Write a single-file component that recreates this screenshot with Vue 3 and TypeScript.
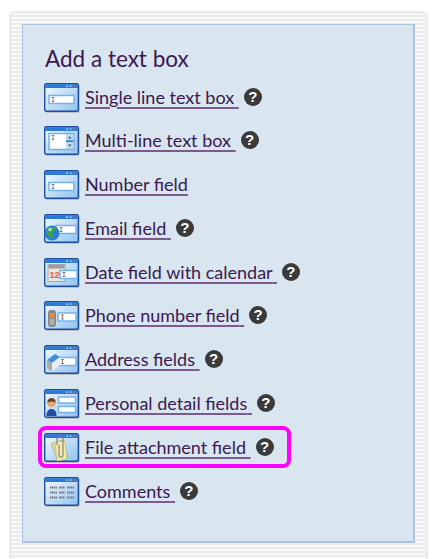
<script setup lang="ts">
interface Field {
	label: string;
	icon: string;
	trail?: boolean;
	help?: boolean;
	active?: boolean;
}

const fields: Field[] = [
	{ label: "Single line text box", icon: "single", trail: true, help: true },
	{ label: "Multi-line text box", icon: "multi", trail: true, help: true },
	{ label: "Number field", icon: "number" },
	{ label: "Email field", icon: "email", trail: true, help: true },
	{ label: "Date field with calendar", icon: "date", trail: true, help: true },
	{ label: "Phone number field", icon: "phone", trail: true, help: true },
	{ label: "Address fields", icon: "address", trail: true, help: true },
	{ label: "Personal detail fields", icon: "personal", trail: true, help: true },
	{ label: "File attachment field", icon: "file", trail: true, help: true, active: true },
	{ label: "Comments", icon: "comments", trail: true, help: true },
];
</script>

<template>
	<div class="page">
		<div class="card">
			<div class="panel">
				<h2>Add a text box</h2>
				<ul class="field-list">
					<li v-for="field in fields" :key="field.icon" class="field-row">
						<div class="field-item" :class="{ active: field.active }">
							<svg class="field-icon" width="36" height="30" viewBox="0 0 36 30">
								<defs>
									<linearGradient :id="'bg-' + field.icon" x1="0" y1="0" x2="1" y2="1">
										<stop offset="0" stop-color="#f4faff" />
										<stop offset="1" stop-color="#8fc2ef" />
									</linearGradient>
								</defs>
								<rect x="1.5" y="1.5" width="34" height="28" rx="1.5" fill="#888" opacity="0.7" />
								<rect x="0.7" y="0.7" width="33.6" height="27.6" rx="1.5" :fill="'url(#bg-' + field.icon + ')'" stroke="#1f4f9c" stroke-width="1.4" />
								<rect x="1.2" y="1.2" width="32.6" height="3.8" fill="#2a7ad6" />
								<rect x="22" y="2.4" width="2" height="1.4" fill="#a9cdf0" />
								<rect x="25.5" y="2.4" width="2" height="1.4" fill="#a9cdf0" />
								<rect x="29" y="2.4" width="2.4" height="1.4" fill="#e2603a" />

								<g v-if="field.icon === 'single' || field.icon === 'number'">
									<rect x="5" y="12.5" width="25" height="8" fill="#fff" stroke="#6fb0e6" stroke-width="1.4" />
									<path d="M7.5 14.5h3M9 14.5v4M7.5 18.5h3" stroke="#777" stroke-width="0.9" fill="none" />
								</g>

								<g v-else-if="field.icon === 'multi'">
									<rect x="5" y="7.5" width="25" height="16" fill="#fff" stroke="#6fb0e6" stroke-width="1.4" />
									<rect x="22" y="8" width="7.5" height="15" fill="#bcd9f2" />
									<path d="M24 12.5l1.8-2.2 1.8 2.2zM24 18.500l1.8 2.2 1.8-2.2z" fill="#555" />
									<rect x="22" y="14.4" width="7.5" height="1.6" fill="#2f7fd8" />
									<path d="M7.5 9.5h3M9 9.5v4M7.5 13.5h3" stroke="#777" stroke-width="0.9" fill="none" />
								</g>

								<g v-else-if="field.icon === 'email'">
									<rect x="12" y="11.5" width="20" height="8" fill="#fff" stroke="#6fb0e6" stroke-width="1.4" />
									<path d="M15.5 13.5h3M17 13.5v4M15.5 17.5h3" stroke="#777" stroke-width="0.9" fill="none" />
									<circle cx="8" cy="19" r="7.5" fill="#2a7fd0" />
									<path d="M2.500 16c3-4 7-4 10-2-1 3-3 2-4 4s1 3 0 6c-3 0-6-4-6-8z" fill="#3fa53a" />
									<circle cx="6" cy="15.500" r="1.800" fill="#cfe8fb" opacity="0.8" />
								</g>

								<g v-else-if="field.icon === 'date'">
									<rect x="4" y="6.500" width="17" height="17" fill="#e8e6e0" stroke="#9a9a9a" stroke-width="0.8" />
									<rect x="4.500" y="7" width="16" height="3.500" fill="#9c9c9c" />
									<text x="5.500" y="20" class="date-num">12</text>
									<rect x="16" y="12.500" width="17" height="8" fill="#fff" stroke="#6fb0e6" stroke-width="1.4" />
									<path d="M18.500 14.500h3M20 14.500v4M18.500 18.500h3" stroke="#777" stroke-width="0.9" fill="none" />
								</g>

								<g v-else-if="field.icon === 'phone'">
									<rect x="14" y="12" width="18" height="8" fill="#fff" stroke="#6fb0e6" stroke-width="1.4" />
									<path d="M17 14h3M18.500 14v4M17 18h3" stroke="#777" stroke-width="0.9" fill="none" />
									<rect x="4" y="9" width="8" height="17" rx="3" fill="#858585" />
									<rect x="5.500" y="12" width="5" height="5" fill="#e88a3a" />
									<rect x="5.500" y="18" width="5" height="6" fill="#b0b0b0" />
								</g>

								<g v-else-if="field.icon === 'address'">
									<rect x="14" y="12.500" width="18" height="8" fill="#fff" stroke="#6fb0e6" stroke-width="1.4" />
									<path d="M17 14.500h3M18.500 14.500v4M17 18.500h3" stroke="#777" stroke-width="0.9" fill="none" />
									<path d="M3 15l8-6 5 3-8 6z" fill="#3f8fdc" />
									<path d="M3 15l5 3v8l-5-3z" fill="#a9a9a9" />
									<path d="M8 18l8-6v8l-8 6z" fill="#ececec" />
								</g>

								<g v-else-if="field.icon === 'personal'">
									<rect x="14.500" y="8" width="17" height="6" fill="#fff" stroke="#6fb0e6" stroke-width="1.4" />
									<rect x="14.500" y="17.500" width="17" height="6" fill="#fff" stroke="#6fb0e6" stroke-width="1.4" />
									<path d="M2.500 27c0-5 2-7 5-7s5 2 5 7z" fill="#1f4fa0" />
									<circle cx="7.500" cy="14" r="4.200" fill="#e4a878" />
									<path d="M3.500 14c-1-6 9-7 8 0-2-2-6-2-8 0z" fill="#6b4423" />
								</g>

								<g v-else-if="field.icon === 'file'">
									<path d="M7 11l11-4 6 17-10 4z" fill="#dcd99e" stroke="#a8a468" stroke-width="0.6" />
									<path d="M11 9l10-1 2 18-10 2z" fill="#f0ebac" stroke="#b8b478" stroke-width="0.6" />
									<path d="M15 12v10c0 3 4 3 4 0V6c0-3-6-3-6 0v6" fill="none" stroke="#7e7e78" stroke-width="1.100" />
								</g>

								<g v-else>
									<path v-for="y in [10.5, 15.5, 20.5]" :key="y" :d="'M6 ' + y + 'h7M15 ' + y + 'h6M23 ' + y + 'h7'" stroke="#777" stroke-width="1.800" stroke-dasharray="1.400 0.500" fill="none" />
								</g>
							</svg>
							<a class="field-link" href="#">{{ field.label }}<span v-if="field.trail">&nbsp;</span></a>
							<span v-if="field.help" class="help-badge">?</span>
						</div>
					</li>
				</ul>
			</div>
		</div>
	</div>
</template>

<style scoped>
.page {
	width: 437px;
	height: 559px;
	overflow: hidden;
	padding: 12px 10px 0;
	box-sizing: border-box;
	background: #fff;
}

.card {
	height: 560px;
	box-sizing: border-box;
	padding: 11px 11px 0;
	border: 1px solid #e6e6e6;
	border-radius: 4px 4px 0 0;
	box-shadow: 0 0 3px rgba(0, 0, 0, 0.16);
	background: repeating-linear-gradient(to bottom, #f8f8f8 0, #f8f8f8 2px, #ebebeb 2px, #ebebeb 4px);
}

.panel {
	height: 519px;
	box-sizing: border-box;
	padding: 19px 22px 0;
	background: #d9e5ef;
	border: 1px solid #a9c5e2;
	border-width: 1px 2px 2px 1px;
	color: #3a1a4f;
	font-family: Lato, "Liberation Sans", sans-serif;
}

h2 {
	margin: 0 0 4px;
	font-size: 22.5px;
	font-weight: 400;
	line-height: 30px;
}

.field-list {
	list-style: none;
	margin: 0;
	padding: 0;
	display: flex;
	flex-direction: column;
	gap: 6.8px;
}

.field-row {
	height: 37px;
	display: flex;
	align-items: center;
}

.field-item {
	display: inline-flex;
	align-items: center;
	gap: 5px;
}

.field-item.active {
	margin-left: -7px;
	padding: 2px 13px 2px 3px;
	border: 4px solid #ff00ff;
	border-radius: 8px;
}

.field-icon {
	display: block;
	flex: none;
	margin: 1px 0 -1px -1px;
}

.date-num {
	font-family: "Liberation Sans", sans-serif;
	font-size: 9px;
	font-weight: 700;
	fill: #e8601c;
}

.field-link {
	color: #3a1a4f;
	font-size: 18px;
	line-height: 24px;
	text-decoration: underline;
	text-decoration-color: #7a5a8f;
	text-decoration-thickness: 2px;
	text-underline-offset: 3px;
}

.help-badge {
	flex: none;
	width: 18px;
	height: 18px;
	border-radius: 50%;
	background: #3a3a3a;
	color: #fff;
	font-family: "Liberation Sans", sans-serif;
	font-size: 15px;
	font-weight: 700;
	line-height: 18px;
	text-align: center;
}
</style>
